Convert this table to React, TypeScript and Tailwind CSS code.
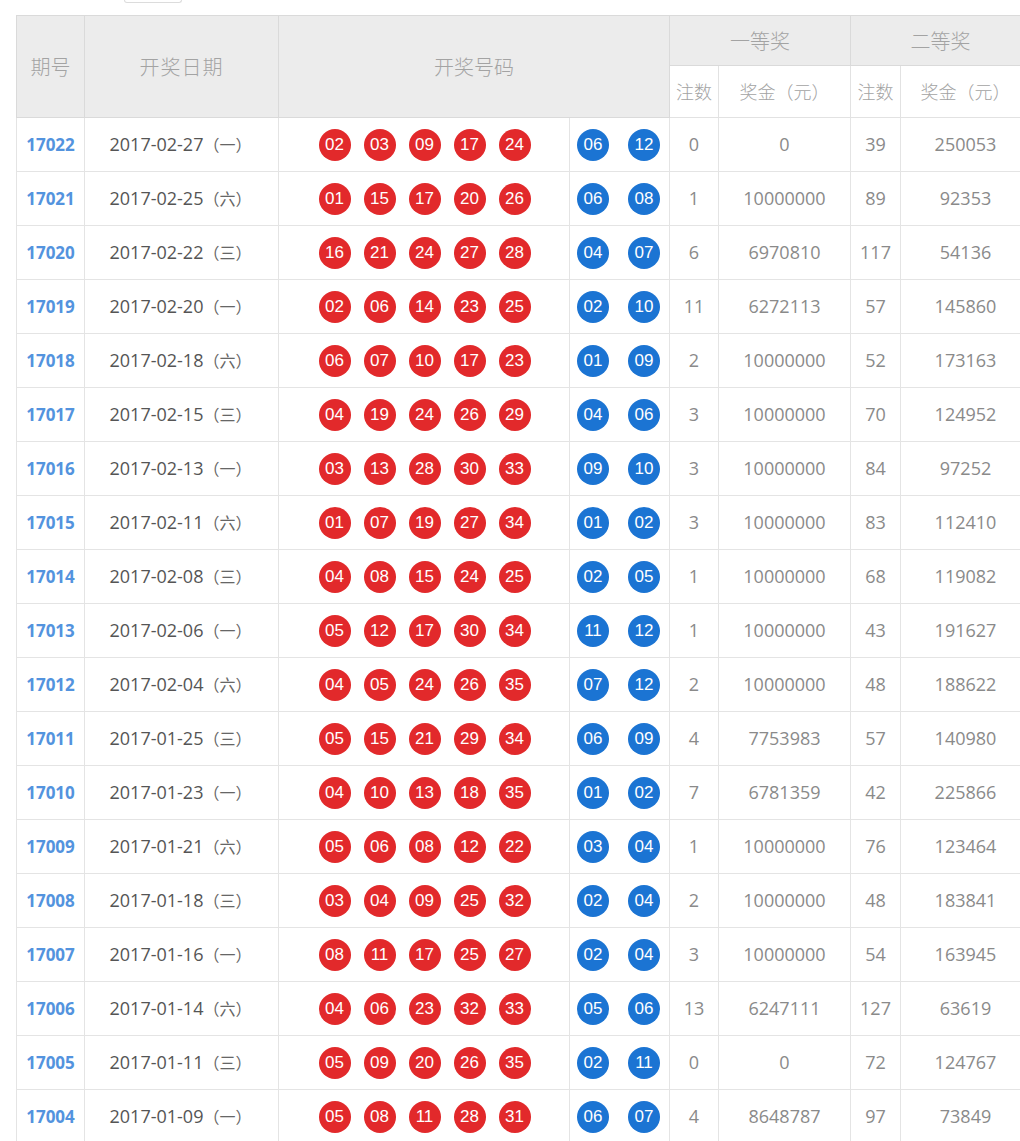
import React from "react";

type Row = {
  id: string;
  date: string;
  wd: string;
  red: string[];
  blue: string[];
  n1: string;
  p1: string;
  n2: string;
  p2: string;
};

const raw = `17022 2017-02-27 一 02 03 09 17 24 06 12 0 0 39 250053
17021 2017-02-25 六 01 15 17 20 26 06 08 1 10000000 89 92353
17020 2017-02-22 三 16 21 24 27 28 04 07 6 6970810 117 54136
17019 2017-02-20 一 02 06 14 23 25 02 10 11 6272113 57 145860
17018 2017-02-18 六 06 07 10 17 23 01 09 2 10000000 52 173163
17017 2017-02-15 三 04 19 24 26 29 04 06 3 10000000 70 124952
17016 2017-02-13 一 03 13 28 30 33 09 10 3 10000000 84 97252
17015 2017-02-11 六 01 07 19 27 34 01 02 3 10000000 83 112410
17014 2017-02-08 三 04 08 15 24 25 02 05 1 10000000 68 119082
17013 2017-02-06 一 05 12 17 30 34 11 12 1 10000000 43 191627
17012 2017-02-04 六 04 05 24 26 35 07 12 2 10000000 48 188622
17011 2017-01-25 三 05 15 21 29 34 06 09 4 7753983 57 140980
17010 2017-01-23 一 04 10 13 18 35 01 02 7 6781359 42 225866
17009 2017-01-21 六 05 06 08 12 22 03 04 1 10000000 76 123464
17008 2017-01-18 三 03 04 09 25 32 02 04 2 10000000 48 183841
17007 2017-01-16 一 08 11 17 25 27 02 04 3 10000000 54 163945
17006 2017-01-14 六 04 06 23 32 33 05 06 13 6247111 127 63619
17005 2017-01-11 三 05 09 20 26 35 02 11 0 0 72 124767
17004 2017-01-09 一 05 08 11 28 31 06 07 4 8648787 97 73849`;

const rows: Row[] = raw.split("\n").map((l) => {
  const p = l.trim().split(/\s+/);
  return {
    id: p[0],
    date: p[1],
    wd: p[2],
    red: p.slice(3, 8),
    blue: p.slice(8, 10),
    n1: p[10],
    p1: p[11],
    n2: p[12],
    p2: p[13],
  };
});

const cjk = "font-['Noto_Sans_CJK_SC','Noto_Sans',sans-serif]";
const headCell = `border border-[#dadada] bg-[#ececec] text-[20px] font-light text-[#a3a3a3] ${cjk}`;
const subCell = `border border-[#e2e2e2] bg-white text-[18px] font-light text-[#a3a3a3] ${cjk}`;
const td = "border border-[#e4e4e4]";
const numCell = `${td} text-center text-[18px] text-[#8a8a8a]`;

function Ball({ n, blue }: { n: string; blue?: boolean }) {
  return (
    <span
      className={
        blue
          ? "flex h-[32px] w-[32px] items-center justify-center rounded-full bg-[#1b74d3] font-['Liberation_Sans',Arial,sans-serif] text-[17px] leading-none text-white"
          : "flex h-[32px] w-[32px] items-center justify-center rounded-full bg-[#e2292b] font-['Liberation_Sans',Arial,sans-serif] text-[17px] leading-none text-white"
      }
    >
      {n}
    </span>
  );
}

export default function App() {
  return (
    <div className="h-[1141px] w-[1020px] overflow-hidden bg-white font-['Open_Sans','Noto_Sans_CJK_SC',sans-serif]">
      <div className="ml-[124px] h-[3px] w-[58px] rounded-b-[4px] border-x border-b border-[#dcdcdc]" />
      <table className="ml-[16px] mt-[12px] w-[1014px] table-fixed border-collapse">
        <colgroup>
          <col className="w-[68px]" />
          <col className="w-[194px]" />
          <col className="w-[291px]" />
          <col className="w-[100px]" />
          <col className="w-[49px]" />
          <col className="w-[132px]" />
          <col className="w-[50px]" />
          <col className="w-[130px]" />
        </colgroup>
        <thead>
          <tr className="h-[50px]">
            <th rowSpan={2} className={headCell}>
              期号
            </th>
            <th rowSpan={2} className={`${headCell} tracking-[1px]`}>
              开奖日期
            </th>
            <th rowSpan={2} colSpan={2} className={headCell}>
              开奖号码
            </th>
            <th colSpan={2} className={headCell}>
              一等奖
            </th>
            <th colSpan={2} className={headCell}>
              二等奖
            </th>
          </tr>
          <tr className="h-[52px]">
            <th className={subCell}>注数</th>
            <th className={subCell}>奖金（元）</th>
            <th className={subCell}>注数</th>
            <th className={subCell}>奖金（元）</th>
          </tr>
        </thead>
        <tbody>
          {rows.map((r) => (
            <tr key={r.id} className="h-[54px]">
              <td className={`${td} text-center text-[17px] font-bold text-[#5393de]`}>{r.id}</td>
              <td className={`${td} pr-[2px] text-center text-[18px] text-[#555555]`}>
                {r.date}
                <span className={`text-[16px] text-[#666666] ${cjk}`}>（{r.wd}）</span>
              </td>
              <td className={td}>
                <div className="flex items-center justify-center gap-[13px] pl-[1px]">
                  {r.red.map((n, i) => (
                    <Ball key={i} n={n} />
                  ))}
                </div>
              </td>
              <td className={td}>
                <div className="flex items-center justify-center gap-[19px] pr-[2px]">
                  {r.blue.map((n, i) => (
                    <Ball key={i} n={n} blue />
                  ))}
                </div>
              </td>
              <td className={numCell}>{r.n1}</td>
              <td className={numCell}>{r.p1}</td>
              <td className={numCell}>{r.n2}</td>
              <td className={numCell}>{r.p2}</td>
            </tr>
          ))}
        </tbody>
      </table>
    </div>
  );
}
